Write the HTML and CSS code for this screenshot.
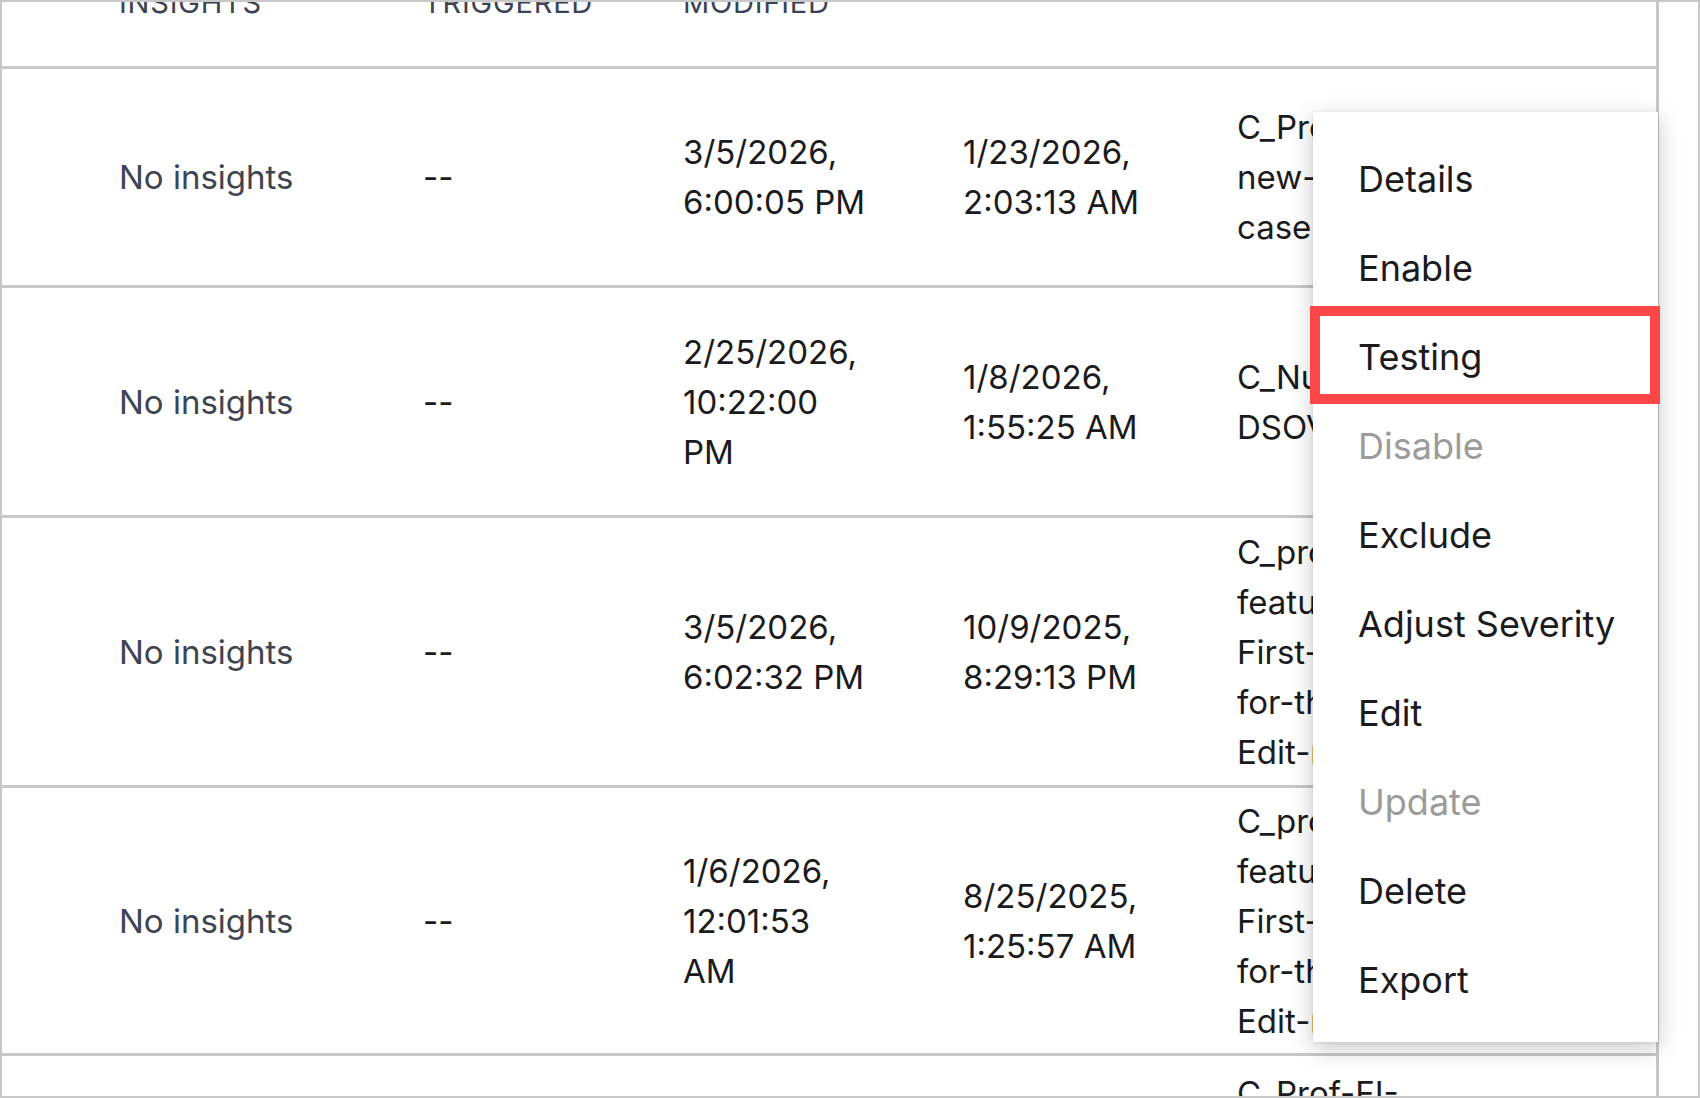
FILE: index.html
```html
<!DOCTYPE html>
<html lang="en">
<head>
<meta charset="utf-8">
<title>Alerts table</title>
<link rel="stylesheet" href="styles.css">
</head>
<body>
<div class="frame">
  <div class="viewport">
    <div class="table">
      <div class="row head">
        <div class="cell th">Active<br>Insights</div>
        <div class="cell th">Last<br>Triggered</div>
        <div class="cell th">Last<br>Modified</div>
        <div class="cell th">Created</div>
        <div class="cell th">Name</div>
      </div>

      <div class="row r1">
        <div class="cell muted">No insights</div>
        <div class="cell">--</div>
        <div class="cell"><span class="ln">3/5/2026,</span><span class="ln">6:00:05 PM</span></div>
        <div class="cell"><span class="ln">1/23/2026,</span><span class="ln">2:03:13 AM</span></div>
        <div class="cell name"><span class="ln">C_Prod-Alert-for-</span><span class="ln">new-incidents-</span><span class="ln">cases-created</span></div>
      </div>

      <div class="row r2">
        <div class="cell muted">No insights</div>
        <div class="cell">--</div>
        <div class="cell"><span class="ln">2/25/2026,</span><span class="ln">10:22:00</span><span class="ln">PM</span></div>
        <div class="cell"><span class="ln">1/8/2026,</span><span class="ln">1:55:25 AM</span></div>
        <div class="cell name"><span class="ln">C_Null-Check-</span><span class="ln">DSOV-rule</span></div>
      </div>

      <div class="row r3">
        <div class="cell muted">No insights</div>
        <div class="cell">--</div>
        <div class="cell"><span class="ln">3/5/2026,</span><span class="ln">6:02:32 PM</span></div>
        <div class="cell"><span class="ln">10/9/2025,</span><span class="ln">8:29:13 PM</span></div>
        <div class="cell name"><span class="ln">C_prod-</span><span class="ln">feature-flag-</span><span class="ln">First-seen-</span><span class="ln">for-the-team-</span><span class="ln">Edit-rule</span></div>
      </div>

      <div class="row r4">
        <div class="cell muted">No insights</div>
        <div class="cell">--</div>
        <div class="cell"><span class="ln">1/6/2026,</span><span class="ln">12:01:53</span><span class="ln">AM</span></div>
        <div class="cell"><span class="ln">8/25/2025,</span><span class="ln">1:25:57 AM</span></div>
        <div class="cell name"><span class="ln">C_prod-</span><span class="ln">feature-toggle-</span><span class="ln">First-time-</span><span class="ln">for-the-owner-</span><span class="ln">Edit-rule</span></div>
      </div>

      <div class="row r5">
        <div class="cell muted">No insights</div>
        <div class="cell">--</div>
        <div class="cell"><span class="ln">12/2/2025,</span><span class="ln">4:11:09 PM</span></div>
        <div class="cell"><span class="ln">7/14/2025,</span><span class="ln">9:40:21 AM</span></div>
        <div class="cell name"><span class="ln">C_Prof-FI-</span><span class="ln">feature-</span><span class="ln">First-</span><span class="ln">for-the-</span><span class="ln">Edit-</span><span class="ln">rule</span></div>
      </div>
    </div>
  </div>

  <div class="menu">
    <div class="item">Details</div>
    <div class="item">Enable</div>
    <div class="item marked">Testing<span class="mark"></span></div>
    <div class="item off">Disable</div>
    <div class="item">Exclude</div>
    <div class="item">Adjust Severity</div>
    <div class="item">Edit</div>
    <div class="item off">Update</div>
    <div class="item">Delete</div>
    <div class="item">Export</div>
  </div>
</div>
</body>
</html>
```

FILE: styles.css
```css
html, body {
  margin: 0;
  padding: 0;
  background: #ffffff;
}

body {
  font-family: Inter, "Noto Sans", "Liberation Sans", sans-serif;
  color: #1b1b1d;
}

.frame {
  position: relative;
  width: 1700px;
  height: 1098px;
  box-sizing: border-box;
  border: 2px solid #c8c8c8;
  background: #ffffff;
  overflow: hidden;
  display: flex;
}

.viewport {
  width: 1657px;
  flex: none;
  height: 100%;
  box-sizing: border-box;
  border-right: 3px solid #c8c8c8;
  overflow: hidden;
}

.table {
  margin-top: -96px;
}

.row {
  display: grid;
  grid-template-columns: 304px 260px 280px 274px 1fr;
  align-items: center;
  padding-left: 117px;
  box-sizing: border-box;
  border-bottom: 3px solid #c8c8c8;
  font-size: 33px;
  line-height: 50px;
}

.head { height: 163px; }
.r1 { height: 219px; }
.r2 { height: 230px; }
.r3 { height: 270px; }
.r4 { height: 268px; }
.r5 { height: 326px; }

.cell {
  white-space: nowrap;
  overflow: hidden;
}

.th {
  font-size: 29px;
  line-height: 34px;
  letter-spacing: 0.8px;
  text-transform: uppercase;
  color: #3b4252;
}

.muted {
  color: #3d4452;
}

.ln {
  display: block;
}

.menu {
  position: absolute;
  left: 1311px;
  top: 110px;
  width: 345px;
  box-sizing: border-box;
  padding: 22px 0 18px;
  background: #ffffff;
  box-shadow: 0 6px 22px rgba(0, 0, 0, 0.22), 0 1px 4px rgba(0, 0, 0, 0.08);
  font-size: 36px;
  line-height: 44px;
}

.item {
  position: relative;
  height: 89px;
  display: flex;
  align-items: center;
  padding-left: 45px;
  color: #1b1b1d;
}

.item.off {
  color: #9b9b9b;
}

.mark {
  position: absolute;
  top: -6px;
  bottom: -3px;
  left: -3px;
  right: -2px;
  border: 10px solid #ff4646;
}
```
